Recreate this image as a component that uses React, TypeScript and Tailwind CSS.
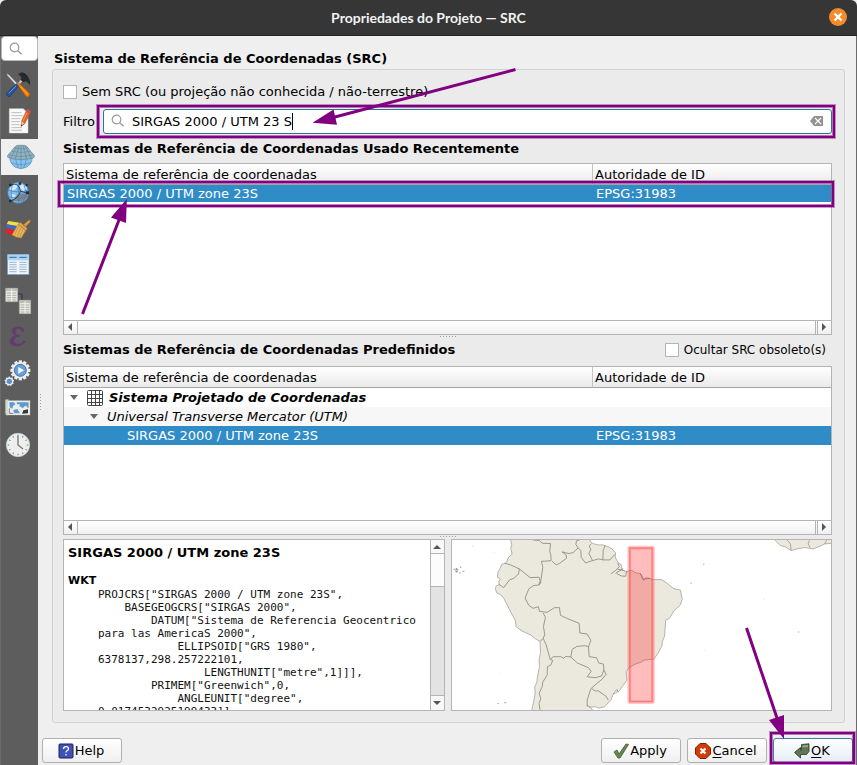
import React, { useState } from "react";

const PROJECTION_WKT = `PROJCRS["SIRGAS 2000 / UTM zone 23S",
    BASEGEOGCRS["SIRGAS 2000",
        DATUM["Sistema de Referencia Geocentrico
para las AmericaS 2000",
            ELLIPSOID["GRS 1980",
6378137,298.257222101,
                LENGTHUNIT["metre",1]]],
        PRIMEM["Greenwich",0,
            ANGLEUNIT["degree",
0.0174532925199433]],`;

function SearchIcon({ className = "" }: { className?: string }) {
  return (
    <svg className={className} width="14" height="14" viewBox="0 0 14 14" fill="none" stroke="#9a9a9a">
      <circle cx="5.5" cy="5.5" r="4.3" strokeWidth="1.2" />
      <path d="M8.7 8.7 L12.6 12.2" strokeWidth="1.4" />
    </svg>
  );
}

function GearShape({ cx, cy, r, teeth }: { cx: number; cy: number; r: number; teeth: number }) {
  return (
    <g fill="#ededeb">
      <circle cx={cx} cy={cy} r={r * 0.84} />
      {Array.from({ length: teeth }, (_, i) => (
        <rect
          key={i}
          x={cx - r * 0.16}
          y={cy - r}
          width={r * 0.32}
          height={r * 0.4}
          transform={`rotate(${(360 / teeth) * i} ${cx} ${cy})`}
        />
      ))}
    </g>
  );
}

const sections: { name: string; viewBox: string; art: React.ReactNode }[] = [
  {
    name: "Geral",
    viewBox: "12 111 96 108",
    art: (
      <>
        <path d="M20 131 L26 134 L56 165 L52 169 L23 137 Z" fill="#dfe3e6" stroke="#9aa2a8" strokeWidth="1" />
        <path d="M70 146 L50 168" stroke="#c9c9c9" strokeWidth="6" />
        <path d="M54 132 L66 127 Q84 131 90 155 L90 165 L84 158 L78 154 L70 157 L62 150 L64 142 Z" fill="#252a2c" />
        <path d="M50 161 L56 168 L30 199 Q23 201 19 194 Q19 188 25 184 Z" fill="#2856a0" stroke="#173669" strokeWidth="2" />
        <path d="M48 168 L26 190" stroke="#6a94d2" strokeWidth="3" />
        <path d="M52 162 L58 160 L90 191 L84 202 L77 198 Z" fill="#f57c00" stroke="#b34f00" strokeWidth="1.5" />
        <path d="M60 169 L83 193" stroke="#ffb04a" strokeWidth="3" />
      </>
    ),
  },
  {
    name: "Metadados",
    viewBox: "12 219 96 108",
    art: (
      <>
        <path d="M28 236 H70 L84 250 V309 H28 Z" fill="#fafafa" stroke="#d7d7d7" strokeWidth="1.5" />
        <path d="M34 248 H64 M34 257 H68 M34 266 H62 M34 275 H60 M34 284 H58 M34 293 H66 M34 301 H66" stroke="#bdbdbd" strokeWidth="3" />
        <path d="M79 243 L91 249 L74 281 L63 289 L65 272 Z" fill="#e3662b" stroke="#a8431a" strokeWidth="1.5" />
        <path d="M80 250 L69 274" stroke="#f79b68" strokeWidth="3" />
        <path d="M78 244 L90 250 L93 243 L83 237 Z" fill="#d6504d" />
        <path d="M65 274 L72 280 L63 289 Z" fill="#f0d3a7" />
        <path d="M63 289 L64 283 L68 286 Z" fill="#222" />
      </>
    ),
  },
  {
    name: "SRC",
    viewBox: "12 327 96 108",
    art: (
      <>
        <path d="M29 383 H97 Q95 404 78 412 Q63 420 47 412 Q31 403 29 383 Z" fill="#86c1ec" stroke="#4a88b8" strokeWidth="2" />
        <path d="M34 398 Q63 410 92 398 M63 385 V415 M47 385 Q49 401 55 413 M79 385 Q77 401 71 413" stroke="#4a88b8" strokeWidth="1.7" fill="none" />
        <path d="M51 346 H75 L84 353 L92 364 L103 376 V382 Q82 389 63 389 Q43 389 23 382 V376 L34 364 L42 353 Z" fill="#8fb2c1" stroke="#587e90" strokeWidth="1.7" />
        <path d="M43 354 Q63 359 84 354 M34 364 Q63 371 92 364 M25 375 Q63 384 101 375 M57 346 L46 387 M69 346 L80 387 M63 346 V389 M50 348 L33 384 M76 348 L93 384" stroke="#587e90" strokeWidth="1.5" fill="none" />
      </>
    ),
  },
  {
    name: "Transformações",
    viewBox: "12 435 96 108",
    art: (
      <>
        <circle cx="55" cy="488" r="32" fill="#82bbed" stroke="#2e6da8" strokeWidth="2" />
        <path d="M36 466 Q48 458 53 467 L47 478 L35 483 L29 477 Z M62 461 Q76 464 81 476 L71 484 L60 474 Z M33 492 L47 494 L44 507 L34 502 Z" fill="#d5e9f8" />
        <path d="M24 480 Q55 491 86 480 M25 500 Q55 509 85 500 M55 457 V520 M39 461 Q28 488 40 516 M71 461 Q82 488 70 516" stroke="#3c7eb8" strokeWidth="2" fill="none" />
        <path d="M55 491 L85 489 Q84 505 66 515 L35 513 Z" fill="#6f777c" opacity=".75" />
        <path d="M31 465 Q58 455 61 484 L82 489 M61 485 Q57 502 32 514" stroke="#24313b" strokeWidth="2.5" fill="none" />
        <path d="M27 461 h8 v8 h-8 z M57 457 h7 v7 h-7 z M78 484 h9 v9 h-9 z M27 509 h8 v8 h-8 z M77 462 h6 v6 h-6 z" fill="#242c35" />
      </>
    ),
  },
  {
    name: "Estilos padrão",
    viewBox: "12 543 96 108",
    art: (
      <>
        <path d="M25 573 L58 578 L57 590 L20 583 Z" fill="#f4e03c" />
        <path d="M20 583 L57 589 L52 602 L18 594 Z" fill="#3d68cf" />
        <path d="M18 594 L50 601 L45 618 Q28 615 16 609 Z" fill="#d92727" />
        <path d="M88 569 Q93 571 90 577 L77 590 L70 584 Z" fill="#e5a04b" stroke="#9a6526" strokeWidth="2" />
        <path d="M61 577 L82 595 L77 602 L54 583 Z" fill="#d7a557" stroke="#9a6a2b" strokeWidth="1.5" />
        <path d="M54 583 L77 602 L64 624 Q50 625 36 614 Z" fill="#e9b35b" stroke="#a8722e" strokeWidth="1.5" />
        <path d="M56 590 L44 614 M62 594 L52 619 M68 599 L60 621" stroke="#c08a40" strokeWidth="2" />
      </>
    ),
  },
  {
    name: "Fontes de dados",
    viewBox: "12 21 96 108",
    art: (
      <>
        <rect x="22" y="43" width="65" height="61" fill="#eef4fa" stroke="#5e8fbe" strokeWidth="2" />
        <rect x="23" y="44" width="63" height="17" fill="#a9d3f2" />
        <path d="M28 52 H50 M58 52 H80" stroke="#396b9c" strokeWidth="3" />
        <path d="M28 67 H50 M58 67 H80 M28 74 H50 M58 74 H80 M28 81 H50 M58 81 H80 M28 88 H50 M58 88 H80 M28 95 H50 M58 95 H80" stroke="#9cb8d4" strokeWidth="3" />
        <path d="M54 62 V103" stroke="#fff" strokeWidth="3" />
      </>
    ),
  },
  {
    name: "Relações",
    viewBox: "12 129 96 108",
    art: (
      <>
        <path d="M53 162 H66 V182" fill="none" stroke="#28374d" strokeWidth="3" />
        <path d="M17 145 H53 V185 H17 Z M58 181 H92 V221 H58 Z" fill="#e8e8e2" stroke="#aaa9a2" strokeWidth="2" />
        <path d="M18 146 H52 V153 H18 Z M59 182 H91 V189 H59 Z" fill="#bdbdb6" />
        <path d="M21 159 H49 M21 166 H49 M21 173 H49 M21 180 H49 M62 195 H88 M62 202 H88 M62 209 H88 M62 216 H88" stroke="#a3a39c" strokeWidth="2.5" />
        <path d="M35 148 V184 M75 184 V220" stroke="#f7f7f3" strokeWidth="3" />
      </>
    ),
  },
  {
    name: "Variáveis",
    viewBox: "12 237 96 108",
    art: (
      <path
        d="M73 270 Q69 261 55 261 Q36 261 36 274 Q36 284 49 287 Q30 290 30 303 Q31 318 51 318 Q69 318 76 304 L71 302 Q65 312 54 312 Q41 312 41 301 Q41 291 55 290 L60 290 L60 285 L53 285 Q45 284 45 275 Q46 265 56 265 Q63 266 65 274 Q70 278 73 270 Z"
        fill="#643b70"
        stroke="#643b70"
        strokeWidth="1.5"
      />
    ),
  },
  {
    name: "Macros",
    viewBox: "12 345 96 108",
    art: (
      <>
        <GearShape cx={61} cy={391} r={30} teeth={12} />
        <circle cx="61" cy="391" r="18" fill="#6aa0da" stroke="#4676aa" strokeWidth="3" />
        <path d="M55 381 L72 391 L55 401 Z" fill="#fff" />
        <GearShape cx={28} cy={424} r={14} teeth={9} />
        <circle cx="28" cy="424" r="8" fill="#5990cf" />
      </>
    ),
  },
  {
    name: "QGIS Server",
    viewBox: "12 453 96 108",
    art: (
      <>
        <path d="M16 479 L25 478 V525 L20 526 Q16 524 16 518 Z" fill="#d6d6d2" stroke="#a5a5a0" strokeWidth="1" />
        <rect x="22" y="482" width="68" height="43" fill="#eceeea" stroke="#c2c2bd" strokeWidth="1" />
        <path d="M28 487 H42 L46 493 L39 498 L37 506 L29 502 Z M50 487 H83 V500 L75 497 L69 504 L58 499 L60 493 L51 493 Z M40 510 L52 507 L60 520 H43 Z" fill="#5c99d8" />
        <path d="M66 521 L70 511 L84 508 V520 Z" fill="#35393a" />
        <path d="M28 505 V520 M28 520 H40 M84 487 V504" stroke="#4a4e50" strokeWidth="2" />
      </>
    ),
  },
  {
    name: "Temporal",
    viewBox: "12 561 96 108",
    art: (
      <>
        <circle cx="54" cy="615" r="35" fill="#eeefeb" stroke="#d2d2ce" strokeWidth="2" />
        {Array.from({ length: 12 }, (_, i) => (
          <path key={i} d="M54 584 V589" stroke="#5387bd" strokeWidth="3" transform={`rotate(${i * 30} 54 615)`} />
        ))}
        <path d="M54 587 V615 L69 627" fill="none" stroke="#777" strokeWidth="4" />
      </>
    ),
  },
];

function TitleBar() {
  return (
    <header className="relative flex h-9 items-center justify-center rounded-t-md border-b border-[#222] bg-[#363636]">
      <h1 className="font-[Lato,'Noto_Sans',sans-serif] text-[14px] font-bold text-[#f2f2f2]">Propriedades do Projeto — SRC</h1>
      <button aria-label="Fechar" className="absolute right-[10px] top-2 flex size-[18px] items-center justify-center rounded-full bg-[#f58b2b]">
        <svg width="10" height="10" viewBox="0 0 10 10" stroke="#fff" strokeWidth="2.4">
          <path d="M1.5 1.5 L8.5 8.5 M8.5 1.5 L1.5 8.5" />
        </svg>
      </button>
    </header>
  );
}

function Sidebar() {
  return (
    <nav className="w-[37px] shrink-0 bg-[#5d5d5d]">
      <button aria-label="Pesquisar" className="mb-[6px] flex h-[25px] w-full items-center rounded-sm border border-[#b8b8b8] bg-white pl-[7px]">
        <SearchIcon />
      </button>
      {sections.map((s) => (
        <button
          key={s.name}
          aria-label={s.name}
          className={s.name === "SRC" ? "block h-9 w-full bg-[#efefef] pl-[3px]" : "block h-9 w-full pl-[3px]"}
        >
          <svg width="32" height="36" viewBox={s.viewBox}>
            {s.art}
          </svg>
        </button>
      ))}
    </nav>
  );
}

function HorizontalScrollbar() {
  return (
    <div className="flex h-[14px] shrink-0 border-t border-[#b4b4b4] bg-linear-to-b from-white to-[#f0f0f0]">
      <button aria-label="Rolar à esquerda" className="flex w-[14px] items-center justify-center border-r border-[#b4b4b4] pb-px pr-px">
        <svg width="4" height="8" viewBox="0 0 4 8" fill="#555"><path d="M4 0 V8 L0 4 Z" /></svg>
      </button>
      <div className="mr-px flex-1 border-r border-[#b4b4b4]" />
      <button aria-label="Rolar à direita" className="flex w-[14px] items-center justify-center border-l border-[#b4b4b4] pb-px pr-[2px]">
        <svg width="4" height="8" viewBox="0 0 4 8" fill="#555"><path d="M0 0 V8 L4 4 Z" /></svg>
      </button>
    </div>
  );
}

function SplitterDots() {
  return (
    <div className="flex h-1 items-start justify-center gap-[2px] pt-px">
      {Array.from({ length: 6 }, (_, i) => (
        <span key={i} className="size-px bg-[#a0a0a0]" />
      ))}
    </div>
  );
}

function TableHead() {
  return (
    <thead>
      <tr className="h-[21px] bg-linear-to-b from-white to-[#e9e9e9] text-left">
        <th className="border-b border-r border-b-[#a5a5a5] border-r-[#c4c4c4] p-0 pl-[2px] pt-[2px] font-normal">Sistema de referência de coordenadas</th>
        <th className="w-[238px] border-b border-[#a5a5a5] p-0 pl-[2px] pt-[2px] font-normal">Autoridade de ID</th>
      </tr>
    </thead>
  );
}

function ExpandArrow() {
  return (
    <svg width="8" height="5" viewBox="0 0 8 5" fill="#666"><path d="M0 0 H8 L4 5 Z" /></svg>
  );
}

function RecentTable() {
  return (
    <div className="relative flex h-[172px] flex-col border border-[#b4b4b4] bg-white">
      <table className="w-full table-fixed border-separate border-spacing-0 leading-4">
        <TableHead />
        <tbody>
          <tr className="h-[17px] bg-[#308cc6] text-white">
            <td className="p-0 pl-[3px]">SIRGAS 2000 / UTM zone 23S</td>
            <td className="p-0 pl-[3px]">EPSG:31983</td>
          </tr>
        </tbody>
      </table>
      <div className="flex-1" />
      <HorizontalScrollbar />
      <Highlight className="-left-[6px] -right-[3px] top-[17px] h-[26px]" />
    </div>
  );
}

function PredefinedTable() {
  return (
    <div className="flex h-[169px] flex-col border border-[#b4b4b4] bg-white">
      <table className="w-full table-fixed border-separate border-spacing-0 leading-4">
        <TableHead />
        <tbody>
          <tr className="h-[19px]">
            <td colSpan={2} className="p-0">
              <div className="flex items-center pl-[6px] font-bold italic">
                <ExpandArrow />
                <svg className="ml-[9px] mr-[6px]" width="16" height="16" viewBox="0 0 16 16" fill="none" stroke="#444">
                  <rect x=".5" y=".5" width="15" height="15" rx="1" />
                  <path d="M4.5 0 V16 M8.5 0 V16 M12.5 0 V16 M0 4.5 H16 M0 8.5 H16 M0 12.5 H16" />
                </svg>
                Sistema Projetado de Coordenadas
              </div>
            </td>
          </tr>
          <tr className="h-[19px] bg-[#f7f7f7]">
            <td colSpan={2} className="p-0">
              <div className="flex items-center gap-[9px] pl-[26px] italic">
                <ExpandArrow />
                Universal Transverse Mercator (UTM)
              </div>
            </td>
          </tr>
          <tr className="h-[19px] bg-[#308cc6] text-white">
            <td className="p-0 pl-[63px]">SIRGAS 2000 / UTM zone 23S</td>
            <td className="p-0 pl-[3px]">EPSG:31983</td>
          </tr>
        </tbody>
      </table>
      <div className="flex-1" />
      <HorizontalScrollbar />
    </div>
  );
}

function WktPane() {
  return (
    <div className="flex min-w-0 flex-1 overflow-hidden border border-[#b4b4b4] bg-white">
      <div className="min-w-0 flex-1 overflow-hidden pl-1 pt-[5px]">
        <h3 className="text-[13px] font-bold leading-4">SIRGAS 2000 / UTM zone 23S</h3>
        <h4 className="mt-[13px] text-[11px] font-bold leading-[14px]">WKT</h4>
        <pre className="ml-[30px] font-['DejaVu_Sans_Mono',monospace] text-[11px] leading-[13px] text-[#111]">{PROJECTION_WKT}</pre>
      </div>
      <div className="flex w-[14px] shrink-0 flex-col border-l border-[#b4b4b4] bg-[#e3e3e3]">
        <button aria-label="Rolar para cima" className="flex h-[14px] items-center justify-center border-b border-[#b4b4b4] bg-[#f8f8f8]">
          <svg width="8" height="4" viewBox="0 0 8 4" fill="#555"><path d="M0 4 H8 L4 0 Z" /></svg>
        </button>
        <div className="h-[33px] border-b border-[#b4b4b4] bg-[#fcfcfc]" />
        <div className="flex-1" />
        <button aria-label="Rolar para baixo" className="flex h-[15px] items-center justify-center border-t border-[#b4b4b4] bg-[#f8f8f8] pb-px">
          <svg width="8" height="4" viewBox="0 0 8 4" fill="#555"><path d="M0 0 H8 L4 4 Z" /></svg>
        </button>
      </div>
    </div>
  );
}

function ExtentMap() {
  return (
    <div className="min-w-0 flex-1 overflow-hidden border border-[#b4b4b4] bg-white">
      <svg className="size-full" viewBox="38 30 1137 510" preserveAspectRatio="xMidYMid slice" strokeLinejoin="round">
        <g fill="#ebe9de" stroke="#a8a69c" strokeWidth="2.5">
          <path d="M213 25 L217 45 L214 56 L218 72 L206 84 L203 94 L197 100 L187 103 L182 116 L176 125 L174 142 L183 147 L178 154 L180 164 L170 168 L168 178 L173 190 L183 193 L193 205 L203 224 L215 248 L228 272 L230 290 L246 302 L275 316 L290 328 L302 334 L303 370 L299 388 L300 410 L294 440 L292 458 L286 468 L287 490 L283 512 L276 545 H462 L455 534 L443 527 L455 531 L468 530 L478 534 L495 530 L506 518 L515 508 L521 492 L531 478 L536 486 L548 470 L562 450 L560 425 L568 413 L582 405 L590 401 L603 397 L615 390 L643 387 L655 370 L667 348 L668 335 L675 318 L678 271 L689 265 L705 240 L722 225 L728 208 L722 180 L702 176 L680 158 L665 149 L640 149 L628 145 L612 148 L603 131 L590 129 L575 121 L560 126 L547 119 L545 104 L536 99 L527 82 L528 68 L515 55 L490 45 L475 45 L460 41 L452 34 L452 25 Z" />
          <path d="M1000 25 L1022 47 L1037 51 L1054 62 L1075 56 L1096 53 L1120 57 L1145 47 L1155 42 L1180 40 V25 Z" />
        </g>
        <g fill="none" stroke="#8a887e" strokeWidth="2.5">
          <path d="M280 30 L300 32 L308 40 L333 41 L331 65 L334 75 L335 92 L316 94 L306 94 L310 113 L303 160 L299 165" />
          <path d="M338 94 L350 105 L361 100 L381 85 L380 75 L368 66 L388 71 L401 68 L416 54 L409 44 L411 33 L420 30" />
          <path d="M416 54 L424 62 L425 82 L438 99 L459 92 L448 70 L454 59 L449 48 L456 41" />
          <path d="M459 92 L477 87 L490 90 L491 62 L497 46 M490 90 L511 90 L525 74" />
          <path d="M196 100 L214 105 L240 117 L237 132 L225 144 L210 150 L193 173 L178 163" />
          <path d="M240 117 L272 143 L299 142 L302 151 L299 165 L282 167 L268 177 L257 204 L268 226 L281 235 L297 230 L300 244 L323 247 L345 233 L360 233 L363 256 L384 266 L419 280 L421 309 L443 312 L454 331 L447 350" />
          <path d="M311 249 L318 262 L312 290 L316 314 L311 325 L302 334 M311 325 L320 344 L332 388 L341 380 L364 380 L373 385 L378 379 L394 381" />
          <path d="M394 381 L398 358 L412 349 L438 347 L447 350 L449 380 L471 383 L478 399 L492 402 L493 420 L486 438 L466 443 L443 440 L455 424 L447 413 L414 399 Z" />
          <path d="M493 420 L500 433 L487 448 L472 460 L454 476 L443 510 L443 528 M457 476 L468 483 L476 482 L500 499 L506 510" />
          <path d="M332 388 L340 391 L334 405 L324 410 L323 435 L310 456 L308 470 L299 490 L304 505 L299 520 L302 542" />
          <path d="M514 132 L529 121 L539 111 L535 99 M528 130 L551 116 M531 131 L545 138 L558 139 L562 122 M534 118 L555 122" strokeWidth="2.5" />
          <path d="M602 131 L612 151 L618 144 L632 146" />
          <path d="M1042 30 L1052 42 L1054 61 M1109 31 L1105 42 L1111 53 M1161 30 L1154 42" strokeWidth="2" />
          <path d="M520 492 L532 487 L534 479" strokeWidth="2" />
        </g>
        <path d="M43 118 h5 m3 -4 v4 h6 m-10 5 h9 m-4 5 v-3 M60 129 h4 M70 124 h5 M62 112 h4" fill="none" stroke="#8f8f89" strokeWidth="3" />
        <path d="M98 48 h4 M164 67 h3 M971 209 h4 M792 361 h3 M183 430 h2" stroke="#ddd" strokeWidth="3" />
        <path d="M790 103 h4 M752 160 h4 M1074 306 h4 M174 520 h4 M194 518 h7" stroke="#aaa" strokeWidth="3" />
        <rect x="569" y="53" width="71" height="463" fill="#ff0000" fillOpacity=".26" />
        <rect x="569" y="53" width="71" height="463" fill="none" stroke="#ff5050" strokeOpacity=".32" strokeWidth="11" rx="2" />
        <rect x="570" y="54" width="69" height="461" fill="none" stroke="#ff5050" strokeOpacity=".4" strokeWidth="5" />
      </svg>
    </div>
  );
}

function Highlight({ className }: { className: string }) {
  return (
    <span
      aria-hidden="true"
      className={`pointer-events-none absolute z-10 border-2 border-[#800080] shadow-[inset_0_0_0_1px_rgba(128,0,128,0.5)] outline-1 outline-[#800080]/40 ${className}`}
    />
  );
}

function Arrows() {
  return (
    <svg className="pointer-events-none absolute left-0 top-0 z-20" width="857" height="765" viewBox="0 0 857 765" stroke="#800080" strokeWidth="3" fill="none">
      <path d="M515.5 69.5 L334 117.3 M82.5 314 L119 220 M746.5 628 L777 718" />
      <path d="M312.5 122.7 L333.5 109.5 L337 124.7 Z M126.8 199 L111 217.5 L126 223 Z M784 739 L769 720 L784 715 Z" fill="#800080" stroke="none" />
    </svg>
  );
}

function DialogButton({ children, primary = false }: { children: React.ReactNode; primary?: boolean }) {
  return (
    <button
      className={`flex h-[25px] w-20 items-center justify-center gap-px rounded-[3px] border bg-linear-to-b from-white pr-[2px] ${
        primary ? "border-[#3d7da8] to-[#e4edf5]" : "border-[#b0b0b0] to-[#efefef]"
      }`}
    >
      {children}
    </button>
  );
}

const checkbox = "size-[14px] shrink-0 appearance-none border border-[#b4b4b4] bg-white checked:bg-[#308cc6]";

export default function App() {
  const [filter, setFilter] = useState("SIRGAS 2000 / UTM 23 S");

  return (
    <div className="relative flex min-h-screen flex-col bg-[#efefef] font-['DejaVu_Sans',sans-serif] text-[13px] text-black">
      <TitleBar />
      <div className="flex flex-1 border-x border-[#6b6b6b]">
        <Sidebar />
        <main className="relative flex min-w-0 flex-1 flex-col">
          <div className="absolute left-[2px] top-[358px] flex flex-col gap-[2px]">
            {Array.from({ length: 6 }, (_, i) => (
              <span key={i} className="size-px bg-[#a0a0a0]" />
            ))}
          </div>
          <h2 className="mt-[13px] pl-4 font-bold leading-5">Sistema de Referência de Coordenadas (SRC)</h2>
          <section className="ml-[14px] mr-[11px] rounded-[3px] border border-[#d2d2d2] bg-[#ebebeb] pb-[11px] pl-[10px] pr-3 pt-[11px]">
            <label className="flex h-[21px] items-center gap-[5px]">
              <input type="checkbox" className={checkbox} />
              Sem SRC (ou projeção não conhecida / não-terrestre)
            </label>

            <div className="mt-[7px] flex h-[25px] items-center">
              <label htmlFor="filter" className="w-10">Filtro</label>
              <div className="relative h-full flex-1">
                <input
                  id="filter"
                  value={filter}
                  onChange={(e) => setFilter(e.target.value)}
                  className="size-full rounded-[3px] border border-[#2f7299] bg-white pl-7 pr-8 outline-none"
                />
                <SearchIcon className="absolute left-2 top-[5px]" />
                <span className="absolute left-[189px] top-1 h-[17px] w-px bg-black" />
                <button aria-label="Limpar" className="absolute right-[9px] top-[7px]">
                  <svg width="13" height="10" viewBox="0 0 13 10">
                    <path d="M4 0 H13 V10 H4 L0 5 Z" fill="#929292" />
                    <path d="M5 2 L11 8 M11 2 L5 8" stroke="#fff" strokeWidth="1.2" />
                  </svg>
                </button>
                <Highlight className="-left-[6px] -right-[3px] -top-[4px] h-[33px]" />
              </div>
            </div>

            <h3 className="font-bold leading-[29px]">Sistemas de Referência de Coordenadas Usado Recentemente</h3>
            <RecentTable />
            <SplitterDots />

            <div className="mb-[6px] flex h-[21px] items-center justify-between pr-[6px]">
              <h3 className="font-bold">Sistemas de Referência de Coordenadas Predefinidos</h3>
              <label className="flex items-center gap-[5px] text-[12px]">
                <input type="checkbox" className={checkbox} />
                Ocultar SRC obsoleto(s)
              </label>
            </div>
            <PredefinedTable />
            <SplitterDots />

            <div className="flex h-[172px] gap-[6px]">
              <WktPane />
              <ExtentMap />
            </div>
          </section>

          <footer className="mt-[15px] flex gap-[6px] pb-[2px] pl-1 pr-[3px]">
            <DialogButton>
              <svg width="16" height="16" viewBox="0 0 16 16">
                <rect x="1" y="1" width="14" height="14" rx="1" fill="#3f51b5" stroke="#1a2361" />
                <path d="M5.5 6 Q5.5 3.7 8 3.7 Q10.5 3.7 10.5 5.7 Q10.5 7 9 7.8 Q8 8.4 8 9.6 M8 11 V12.5" fill="none" stroke="#fff" strokeWidth="1.3" />
              </svg>
              Help
            </DialogButton>
            <div className="flex-1" />
            <DialogButton>
              <svg width="16" height="16" viewBox="0 0 16 16">
                <path d="M1 9 L4 7 L6 11 L13 1 L15.5 1.5 L7 15 H5 Z" fill="#69884f" stroke="#40592d" strokeWidth=".8" />
              </svg>
              Apply
            </DialogButton>
            <DialogButton>
              <svg width="16" height="16" viewBox="0 0 16 16">
                <path d="M5 .5 H11 L15.5 5 V11 L11 15.5 H5 L.5 11 V5 Z" fill="#d43a07" stroke="#7d2205" />
                <path d="M5.5 5.5 L10.5 10.5 M10.5 5.5 L5.5 10.5" stroke="#fff" strokeWidth="2.2" />
              </svg>
              <span><span className="underline underline-offset-2">C</span>ancel</span>
            </DialogButton>
            <div className="relative">
              <DialogButton primary>
                <svg width="16" height="16" viewBox="0 0 16 16">
                  <path d="M7.5 1.5 L15 .8 V8.5 L12.5 11.5 H6.5 V15 L.5 9.5 L6.5 4.5 V7.5 H7.5 Z" fill="#5f7556" stroke="#35452f" strokeWidth=".9" />
                  <path d="M8.5 2.5 L14 2 V4 L8.5 4.5 Z" fill="#94a88c" />
                </svg>
                <span><span className="underline underline-offset-2">O</span>K</span>
              </DialogButton>
              <Highlight className="-left-[3px] -right-[2px] -top-[6px] h-8" />
            </div>
          </footer>
        </main>
      </div>
      <Arrows />
    </div>
  );
}
